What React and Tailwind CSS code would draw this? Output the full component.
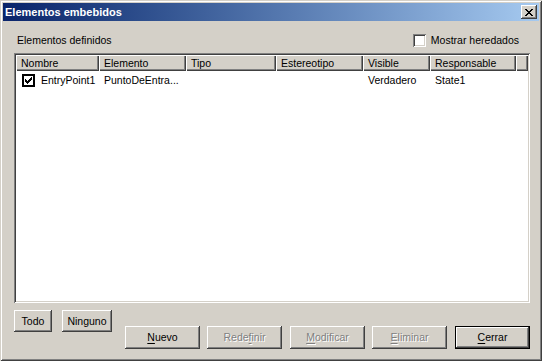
import React from "react";

const font = { fontFamily: '"Liberation Sans", Arial, sans-serif' };

function Btn({ children, w = "w-[75px]", h = "h-[23px]", disabled, def }) {
  const bevel =
    "shadow-[inset_-1px_-1px_#404040,inset_1px_1px_#ffffff,inset_-2px_-2px_#808080,inset_2px_2px_#d4d0c8]";
  const inner = (
    <div
      className={`flex h-full w-full items-center justify-center bg-[#d4d0c8] ${bevel} ${
        disabled ? "text-[#808080] [text-shadow:1px_1px_0_#ffffff]" : "text-black"
      }`}
    >
      {children}
    </div>
  );
  return (
    <div className={`${w} ${h} shrink-0 ${def ? "border border-black" : ""}`}>{inner}</div>
  );
}

function U({ children }) {
  return <span className="underline underline-offset-[2px]">{children}</span>;
}

function SunkenCheck({ checked }) {
  return (
    <div className="flex h-[13px] w-[13px] shrink-0 items-center justify-center bg-white shadow-[inset_1px_1px_#808080,inset_-1px_-1px_#ffffff,inset_2px_2px_#404040,inset_-2px_-2px_#d4d0c8]">
      {checked && (
        <svg width="7" height="7" viewBox="0 0 7 7">
          <path d="M0 2h1v1h1v1h1V3h1V2h1V1h1V0h1v3h-1v1h-1v1h-1v1h-1v1h-1v-1h-1v-1h-1V4H0z" fill="#000" />
        </svg>
      )}
    </div>
  );
}

function FlatCheck() {
  return (
    <div className="flex h-[13px] w-[13px] shrink-0 items-center justify-center border-2 border-black bg-white">
      <svg width="7" height="7" viewBox="0 0 7 7">
        <path d="M0 2h1v1h1v1h1V3h1V2h1V1h1V0h1v3h-1v1h-1v1h-1v1h-1v1h-1v-1h-1v-1h-1V4H0z" fill="#000" />
      </svg>
    </div>
  );
}

const cols = [
  { name: "Nombre", w: "w-[83px]" },
  { name: "Elemento", w: "w-[87px]" },
  { name: "Tipo", w: "w-[90px]" },
  { name: "Estereotipo", w: "w-[87px]" },
  { name: "Visible", w: "w-[67px]" },
  { name: "Responsable", w: "w-[86px]" },
];

export default function App() {
  return (
    <div
      style={font}
      className="flex h-[361px] w-[542px] flex-col bg-[#d4d0c8] p-[3px] text-[10.5px] leading-none text-black shadow-[inset_1px_1px_#d4d0c8,inset_-1px_-1px_#404040,inset_2px_2px_#ffffff,inset_-2px_-2px_#808080]"
    >
      {/* Title bar */}
      <div className="flex h-[18px] items-center justify-between bg-linear-to-r from-[#0a246a] to-[#a6caf0] pl-[2px] pr-[2px]">
        <span className="text-[11px] font-bold text-white">Elementos embebidos</span>
        <div className="flex h-[14px] w-[16px] items-center justify-center bg-[#d4d0c8] shadow-[inset_-1px_-1px_#404040,inset_1px_1px_#ffffff,inset_-2px_-2px_#808080,inset_2px_2px_#d4d0c8]">
          <svg width="8" height="7" viewBox="0 0 8 7">
            <path
              d="M0 0h2v1h1v1h2V1h1V0h2v1H7v1H6v1H5v1h1v1h1v1h1v1H6V6H5V5H3v1H2v1H0V6h1V5h1V4h1V3H2V2H1V1H0z"
              fill="#000"
            />
          </svg>
        </div>
      </div>

      {/* Body */}
      <div className="flex flex-1 flex-col pl-[11px] pr-[9px]">
        <div className="flex h-[32px] items-center justify-between pt-[6px]">
          <span className="ml-[3px]">Elementos definidos</span>
          <div className="mr-[11px] flex items-center gap-[5px]">
            <SunkenCheck />
            <span>Mostrar heredados</span>
          </div>
        </div>

        {/* List */}
        <div className="flex h-[250px] flex-col bg-white p-[2px] shadow-[inset_1px_1px_#808080,inset_-1px_-1px_#ffffff,inset_2px_2px_#404040,inset_-2px_-2px_#d4d0c8]">
          <div className="flex h-[16px] shrink-0">
            {cols.map((c) => (
              <div
                key={c.name}
                className={`${c.w} flex shrink-0 items-center bg-[#d4d0c8] pl-[5px] shadow-[inset_1px_1px_#ffffff,inset_-1px_-1px_#404040,inset_-2px_-2px_#808080]`}
              >
                {c.name}
              </div>
            ))}
            <div className="flex-1 bg-[#d4d0c8] shadow-[inset_1px_1px_#ffffff,inset_-1px_-1px_#404040,inset_-2px_-2px_#808080]" />
          </div>
          <div className="flex h-[18px] items-center">
            <div className="flex w-[83px] shrink-0 items-center gap-[6px] pl-[6px]">
              <FlatCheck />
              <span>EntryPoint1</span>
            </div>
            <div className="w-[87px] shrink-0 pl-[5px]">PuntoDeEntra...</div>
            <div className="w-[90px] shrink-0" />
            <div className="w-[87px] shrink-0" />
            <div className="w-[67px] shrink-0 pl-[5px]">Verdadero</div>
            <div className="w-[86px] shrink-0 pl-[5px]">State1</div>
          </div>
        </div>

        {/* Buttons */}
        <div className="mt-[7px] flex items-start">
          <div className="flex gap-[10px]">
            <Btn w="w-[38px]" h="h-[22px]">Todo</Btn>
            <Btn w="w-[50px]" h="h-[22px]">Ninguno</Btn>
          </div>
          <div className="ml-auto mt-[16px] flex">
            <Btn>
              <U>N</U>uevo
            </Btn>
            <div className="w-[7px] shrink-0" />
            <Btn disabled>
              Rede<U>f</U>inir
            </Btn>
            <div className="w-[8px] shrink-0" />
            <Btn disabled>
              <U>M</U>odificar
            </Btn>
            <div className="w-[7px] shrink-0" />
            <Btn disabled>
              <U>E</U>liminar
            </Btn>
            <div className="w-[8px] shrink-0" />
            <Btn def>
              <U>C</U>errar
            </Btn>
          </div>
        </div>
      </div>
    </div>
  );
}
